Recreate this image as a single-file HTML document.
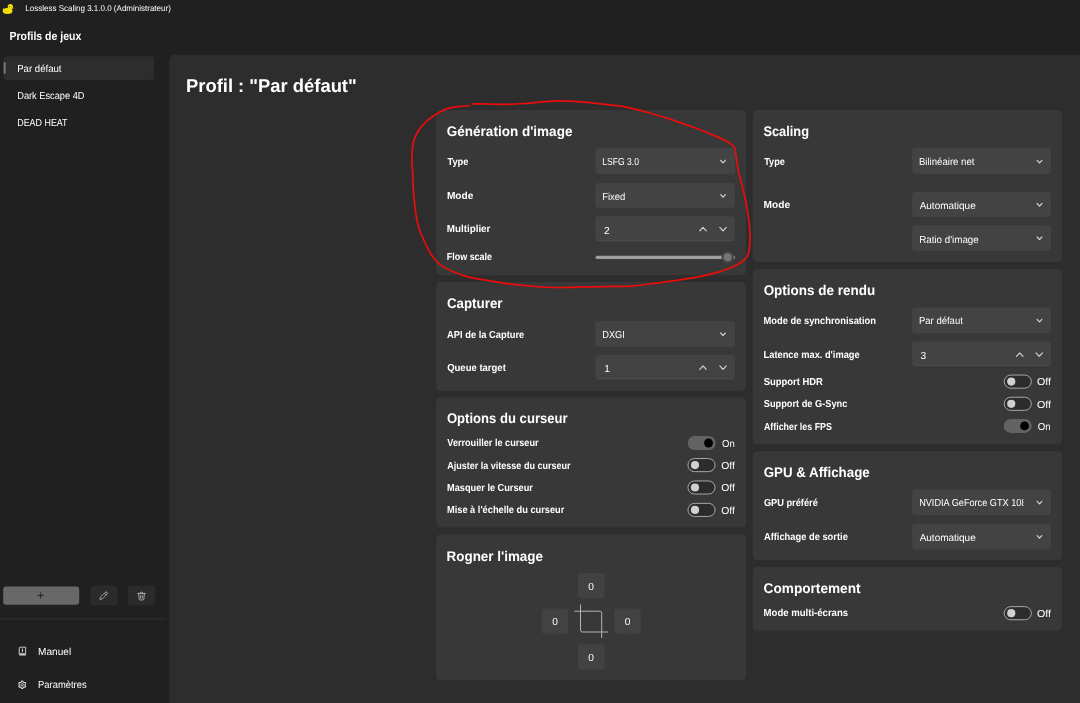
<!DOCTYPE html>
<html lang="fr"><head><meta charset="utf-8"><title>Lossless Scaling</title>
<style>
html,body{margin:0;padding:0;background:#202020;}
body{width:1080px;height:703px;overflow:hidden;position:relative;font-family:"Liberation Sans", Arial, sans-serif;}
#app{position:absolute;left:0;top:0;width:1080px;height:703px;overflow:hidden;background:#202020;}
.b{position:absolute;box-sizing:border-box;}
.tx{font-family:"Liberation Sans", Arial, sans-serif;fill:#fff;text-rendering:geometricPrecision;will-change:transform;}
.ov{position:absolute;left:0;top:0;pointer-events:none;}
</style></head>
<body><div id="app">
<svg class="ov" width="1080" height="703" viewBox="0 0 1080 703">
<rect x="169.3" y="54.8" width="930" height="670" rx="5.5" fill="#2d2d2d" />
<rect x="3.5" y="56.2" width="150.4" height="23.8" rx="3.2" fill="#2d2d2d" />
<rect x="3.6" y="62" width="2.1" height="12" rx="1" fill="#767676" />
<rect x="3.2" y="586.4" width="76" height="18.4" rx="3" fill="#686868" />
<rect x="90.9" y="586.2" width="26" height="18.8" rx="3" fill="#2b2b2b" stroke="#303030" stroke-width="0.6"/>
<rect x="128.1" y="586.2" width="26.6" height="18.8" rx="3" fill="#2b2b2b" stroke="#303030" stroke-width="0.6"/>
<rect x="0" y="618.4" width="166" height="0.9" rx="0" fill="#353535" />
<rect x="436.1" y="110" width="310" height="165.3" rx="4.5" fill="#383838" />
<rect x="436.1" y="281.9" width="310" height="108.85000000000002" rx="4.5" fill="#383838" />
<rect x="436.1" y="397.5" width="310" height="130.0" rx="4.5" fill="#383838" />
<rect x="436.1" y="534.5" width="310" height="145.5" rx="4.5" fill="#383838" />
<rect x="752.85" y="110" width="309.3" height="151.89999999999998" rx="4.5" fill="#383838" />
<rect x="752.85" y="268.9" width="309.3" height="175.10000000000002" rx="4.5" fill="#383838" />
<rect x="752.85" y="451.25" width="309.3" height="108.75" rx="4.5" fill="#383838" />
<rect x="752.85" y="567" width="309.3" height="63.5" rx="4.5" fill="#383838" />
<rect x="595.2" y="148.1" width="139.9" height="26.0" rx="3.5" fill="#434343" />
<rect x="595.2" y="183.1" width="139.9" height="24.700000000000017" rx="3.5" fill="#434343" />
<rect x="595.2" y="321.1" width="139.9" height="25.799999999999955" rx="3.5" fill="#434343" />
<rect x="595.2" y="216.25" width="139.9" height="25.0" rx="3.5" fill="#434343" />
<rect x="597.5" y="240.35" width="135.3" height="0.9" rx="0" fill="#4f4f4f" />
<rect x="595.2" y="355" width="139.9" height="24.25" rx="3.5" fill="#434343" />
<rect x="597.5" y="378.35" width="135.3" height="0.9" rx="0" fill="#4f4f4f" />
<rect x="912.1" y="148.1" width="139" height="26.0" rx="3.5" fill="#434343" />
<rect x="912.1" y="192" width="139" height="25" rx="3.5" fill="#434343" />
<rect x="912.1" y="225.2" width="139" height="25.700000000000017" rx="3.5" fill="#434343" />
<rect x="912.1" y="307.5" width="139" height="25.80000000000001" rx="3.5" fill="#434343" />
<rect x="912.1" y="489.5" width="139" height="25.700000000000045" rx="3.5" fill="#434343" />
<rect x="912.1" y="523.75" width="139" height="25.649999999999977" rx="3.5" fill="#434343" />
<rect x="912.1" y="341.6" width="139" height="24.3" rx="3.5" fill="#434343" />
<rect x="914.1" y="364.95" width="135" height="0.9" rx="0" fill="#4f4f4f" />
<rect x="763.5" y="182.6" width="287.6" height="1" rx="0" fill="#3e3e3e" />
<rect x="595.5" y="255.8" width="139.5" height="3.2" rx="1.6" fill="#9e9e9e" />
<circle cx="727.7" cy="257.3" r="6.2" fill="#454545"/><circle cx="727.7" cy="257.3" r="4" fill="#767676"/>
<rect x="578" y="573" width="26.5" height="25.6" rx="3" fill="#424242" />
<rect x="541.75" y="608.6" width="26.5" height="25.6" rx="3" fill="#424242" />
<rect x="614.25" y="608.6" width="26.5" height="25.6" rx="3" fill="#424242" />
<rect x="578" y="644.25" width="26.5" height="25.6" rx="3" fill="#424242" />
</svg>
<svg class="ov" width="1080" height="703" viewBox="0 0 1080 703">
<rect x="687.7" y="436" width="28" height="14" rx="7" fill="#636363"/>
<circle cx="708.5" cy="443" r="4.45" fill="#000"/>
<rect x="687.95" y="458.55" width="27.1" height="13.1" rx="6.55" fill="#2c2c2c" stroke="#b4b4b4" stroke-width="0.9"/>
<circle cx="695.0" cy="465.1" r="4.1" fill="#d0d0d0"/>
<rect x="687.95" y="480.95" width="27.1" height="13.1" rx="6.55" fill="#2c2c2c" stroke="#b4b4b4" stroke-width="0.9"/>
<circle cx="695.0" cy="487.5" r="4.1" fill="#d0d0d0"/>
<rect x="687.95" y="503.34999999999997" width="27.1" height="13.1" rx="6.55" fill="#2c2c2c" stroke="#b4b4b4" stroke-width="0.9"/>
<circle cx="695.0" cy="509.9" r="4.1" fill="#d0d0d0"/>
<rect x="1004.2" y="375.05" width="27.1" height="13.1" rx="6.55" fill="#2c2c2c" stroke="#b4b4b4" stroke-width="0.9"/>
<circle cx="1011.25" cy="381.6" r="4.1" fill="#d0d0d0"/>
<rect x="1004.2" y="397.25" width="27.1" height="13.1" rx="6.55" fill="#2c2c2c" stroke="#b4b4b4" stroke-width="0.9"/>
<circle cx="1011.25" cy="403.8" r="4.1" fill="#d0d0d0"/>
<rect x="1003.75" y="418.9" width="28" height="14" rx="7" fill="#636363"/>
<circle cx="1024.55" cy="425.9" r="4.45" fill="#000"/>
<rect x="1004.2" y="606.6500000000001" width="27.1" height="13.1" rx="6.55" fill="#2c2c2c" stroke="#b4b4b4" stroke-width="0.9"/>
<circle cx="1011.25" cy="613.2" r="4.1" fill="#d0d0d0"/>
</svg>
<svg class="ov tx" width="1080" height="703" viewBox="0 0 1080 703">
<text id="t0" x="25.34" y="11.20" font-size="8.3" textLength="145.48" lengthAdjust="spacingAndGlyphs">Lossless Scaling 3.1.0.0 (Administrateur)</text>
<text id="t1" x="9.54" y="39.50" font-size="11.8" font-weight="700" textLength="71.70" lengthAdjust="spacingAndGlyphs">Profils de jeux</text>
<text id="t2" x="17.18" y="72.00" font-size="10.2" textLength="44.33" lengthAdjust="spacingAndGlyphs">Par défaut</text>
<text id="t3" x="17.22" y="99.25" font-size="10.2" textLength="67.33" lengthAdjust="spacingAndGlyphs">Dark Escape 4D</text>
<text id="t4" x="17.28" y="126.00" font-size="10.2" textLength="50.26" lengthAdjust="spacingAndGlyphs">DEAD HEAT</text>
<text id="t5" x="38.12" y="654.80" font-size="10.2" textLength="33.01" lengthAdjust="spacingAndGlyphs">Manuel</text>
<text id="t6" x="38.12" y="688.30" font-size="10.2" textLength="48.54" lengthAdjust="spacingAndGlyphs">Paramètres</text>
<text id="t7" x="186.01" y="92.00" font-size="18.5" font-weight="700" textLength="170.72" lengthAdjust="spacingAndGlyphs">Profil : "Par défaut"</text>
<text id="t8" x="446.83" y="136.25" font-size="14" font-weight="700" textLength="125.58" lengthAdjust="spacingAndGlyphs">Génération d'image</text>
<text id="t9" x="446.88" y="308.25" font-size="14" font-weight="700" textLength="55.65" lengthAdjust="spacingAndGlyphs">Capturer</text>
<text id="t10" x="446.93" y="423.00" font-size="14" font-weight="700" textLength="120.69" lengthAdjust="spacingAndGlyphs">Options du curseur</text>
<text id="t11" x="446.54" y="560.50" font-size="14" font-weight="700" textLength="96.47" lengthAdjust="spacingAndGlyphs">Rogner l'image</text>
<text id="t12" x="763.41" y="136.00" font-size="14" font-weight="700" textLength="45.61" lengthAdjust="spacingAndGlyphs">Scaling</text>
<text id="t13" x="763.64" y="295.00" font-size="14" font-weight="700" textLength="111.55" lengthAdjust="spacingAndGlyphs">Options de rendu</text>
<text id="t14" x="763.67" y="476.75" font-size="14" font-weight="700" textLength="106.04" lengthAdjust="spacingAndGlyphs">GPU &amp; Affichage</text>
<text id="t15" x="763.62" y="592.50" font-size="14" font-weight="700" textLength="96.91" lengthAdjust="spacingAndGlyphs">Comportement</text>
<text id="t16" x="447.43" y="165.00" font-size="10.2" font-weight="700" textLength="20.87" lengthAdjust="spacingAndGlyphs">Type</text>
<text id="t17" x="446.88" y="198.75" font-size="10.2" font-weight="700" textLength="26.44" lengthAdjust="spacingAndGlyphs">Mode</text>
<text id="t18" x="446.75" y="232.00" font-size="10.2" font-weight="700" textLength="43.66" lengthAdjust="spacingAndGlyphs">Multiplier</text>
<text id="t19" x="446.87" y="259.50" font-size="10.2" font-weight="700" textLength="45.09" lengthAdjust="spacingAndGlyphs">Flow scale</text>
<text id="t20" x="447.10" y="337.50" font-size="10.2" font-weight="700" textLength="77.14" lengthAdjust="spacingAndGlyphs">API de la Capture</text>
<text id="t21" x="447.16" y="370.75" font-size="10.2" font-weight="700" textLength="58.67" lengthAdjust="spacingAndGlyphs">Queue target</text>
<text id="t22" x="447.30" y="446.25" font-size="10.2" font-weight="700" textLength="91.24" lengthAdjust="spacingAndGlyphs">Verrouiller le curseur</text>
<text id="t23" x="447.21" y="468.50" font-size="10.2" font-weight="700" textLength="123.29" lengthAdjust="spacingAndGlyphs">Ajuster la vitesse du curseur</text>
<text id="t24" x="447.00" y="490.75" font-size="10.2" font-weight="700" textLength="85.89" lengthAdjust="spacingAndGlyphs">Masquer le Curseur</text>
<text id="t25" x="446.97" y="513.00" font-size="10.2" font-weight="700" textLength="117.38" lengthAdjust="spacingAndGlyphs">Mise à l'échelle du curseur</text>
<text id="t26" x="764.16" y="165.00" font-size="10.2" font-weight="700" textLength="20.72" lengthAdjust="spacingAndGlyphs">Type</text>
<text id="t27" x="763.60" y="207.50" font-size="10.2" font-weight="700" textLength="26.51" lengthAdjust="spacingAndGlyphs">Mode</text>
<text id="t28" x="763.58" y="324.00" font-size="10.2" font-weight="700" textLength="112.34" lengthAdjust="spacingAndGlyphs">Mode de synchronisation</text>
<text id="t29" x="763.59" y="358.25" font-size="10.2" font-weight="700" textLength="96.08" lengthAdjust="spacingAndGlyphs">Latence max. d'image</text>
<text id="t30" x="763.69" y="385.00" font-size="10.2" font-weight="700" textLength="59.26" lengthAdjust="spacingAndGlyphs">Support HDR</text>
<text id="t31" x="763.74" y="407.25" font-size="10.2" font-weight="700" textLength="83.57" lengthAdjust="spacingAndGlyphs">Support de G-Sync</text>
<text id="t32" x="763.91" y="429.50" font-size="10.2" font-weight="700" textLength="67.99" lengthAdjust="spacingAndGlyphs">Afficher les FPS</text>
<text id="t33" x="763.88" y="506.25" font-size="10.2" font-weight="700" textLength="53.91" lengthAdjust="spacingAndGlyphs">GPU préféré</text>
<text id="t34" x="763.90" y="540.00" font-size="10.2" font-weight="700" textLength="83.95" lengthAdjust="spacingAndGlyphs">Affichage de sortie</text>
<text id="t35" x="763.61" y="616.30" font-size="10.2" font-weight="700" textLength="84.47" lengthAdjust="spacingAndGlyphs">Mode multi-écrans</text>
<text id="t36" x="602.36" y="165.00" font-size="10.2" textLength="36.65" lengthAdjust="spacingAndGlyphs">LSFG 3.0</text>
<text id="t37" x="602.18" y="200.00" font-size="10.2" textLength="23.22" lengthAdjust="spacingAndGlyphs">Fixed</text>
<text id="t38" x="604.04" y="234.00" font-size="10.2">2</text>
<text id="t39" x="602.25" y="338.00" font-size="10.2" textLength="22.63" lengthAdjust="spacingAndGlyphs">DXGI</text>
<text id="t40" x="604.37" y="372.00" font-size="10.2">1</text>
<text id="t41" x="918.95" y="165.00" font-size="10.2" textLength="55.55" lengthAdjust="spacingAndGlyphs">Bilinéaire net</text>
<text id="t42" x="919.65" y="209.00" font-size="10.2" textLength="56.07" lengthAdjust="spacingAndGlyphs">Automatique</text>
<text id="t43" x="919.13" y="243.00" font-size="10.2" textLength="59.65" lengthAdjust="spacingAndGlyphs">Ratio d'image</text>
<text id="t44" x="918.98" y="324.00" font-size="10.2" textLength="43.87" lengthAdjust="spacingAndGlyphs">Par défaut</text>
<text id="t45" x="920.39" y="359.00" font-size="10.2">3</text>
<text id="t46" x="919.65" y="541.00" font-size="10.2" textLength="56.07" lengthAdjust="spacingAndGlyphs">Automatique</text>
<text id="t47" x="722.05" y="446.60" font-size="10.2" textLength="12.67" lengthAdjust="spacingAndGlyphs">On</text>
<text id="t48" x="721.25" y="468.80" font-size="10.2" textLength="13.66" lengthAdjust="spacingAndGlyphs">Off</text>
<text id="t49" x="721.25" y="491.30" font-size="10.2" textLength="13.66" lengthAdjust="spacingAndGlyphs">Off</text>
<text id="t50" x="721.25" y="513.80" font-size="10.2" textLength="13.66" lengthAdjust="spacingAndGlyphs">Off</text>
<text id="t51" x="1036.91" y="385.25" font-size="10.2" textLength="14.10" lengthAdjust="spacingAndGlyphs">Off</text>
<text id="t52" x="1036.91" y="407.50" font-size="10.2" textLength="14.10" lengthAdjust="spacingAndGlyphs">Off</text>
<text id="t53" x="1037.86" y="429.75" font-size="10.2" textLength="12.87" lengthAdjust="spacingAndGlyphs">On</text>
<text id="t54" x="1036.91" y="616.50" font-size="10.2" textLength="14.10" lengthAdjust="spacingAndGlyphs">Off</text>
</svg>
<svg class="ov tx" width="1080" height="703" viewBox="0 0 1080 703">
<text x="591.2" y="589.6" font-size="10.2" text-anchor="middle">0</text>
<text x="555" y="625.1" font-size="10.2" text-anchor="middle">0</text>
<text x="627.5" y="625.1" font-size="10.2" text-anchor="middle">0</text>
<text x="591.2" y="660.8" font-size="10.2" text-anchor="middle">0</text>
<svg x="915" y="492" width="108.6" height="20" overflow="hidden"><text id="gpu" x="4.15" y="14.25" font-size="10.2" textLength="112.37" lengthAdjust="spacingAndGlyphs">NVIDIA GeForce GTX 1080</text></svg>
</svg>
<svg class="ov" width="1080" height="703" viewBox="0 0 1080 703">
<path d="M720.65 160.3 L723.0 162.90000000000003 L725.35 160.3" fill="none" stroke="#d6d6d6" stroke-width="1.15" stroke-linecap="round" stroke-linejoin="round"/>
<path d="M720.65 194.6 L723.0 197.20000000000002 L725.35 194.6" fill="none" stroke="#d6d6d6" stroke-width="1.15" stroke-linecap="round" stroke-linejoin="round"/>
<path d="M720.65 333.0 L723.0 335.6 L725.35 333.0" fill="none" stroke="#d6d6d6" stroke-width="1.15" stroke-linecap="round" stroke-linejoin="round"/>
<path d="M699.8 230.8 L703.0 227.40000000000003 L706.2 230.8" fill="none" stroke="#d6d6d6" stroke-width="1.15" stroke-linecap="round" stroke-linejoin="round"/>
<path d="M719.8 227.40000000000003 L723.0 230.8 L726.2 227.40000000000003" fill="none" stroke="#d6d6d6" stroke-width="1.15" stroke-linecap="round" stroke-linejoin="round"/>
<path d="M699.8 369.3 L703.0 365.90000000000003 L706.2 369.3" fill="none" stroke="#d6d6d6" stroke-width="1.15" stroke-linecap="round" stroke-linejoin="round"/>
<path d="M719.8 365.90000000000003 L723.0 369.3 L726.2 365.90000000000003" fill="none" stroke="#d6d6d6" stroke-width="1.15" stroke-linecap="round" stroke-linejoin="round"/>
<path d="M1037.15 160.3 L1039.5 162.90000000000003 L1041.85 160.3" fill="none" stroke="#d6d6d6" stroke-width="1.15" stroke-linecap="round" stroke-linejoin="round"/>
<path d="M1037.15 203.5 L1039.5 206.10000000000002 L1041.85 203.5" fill="none" stroke="#d6d6d6" stroke-width="1.15" stroke-linecap="round" stroke-linejoin="round"/>
<path d="M1037.15 237.0 L1039.5 239.60000000000002 L1041.85 237.0" fill="none" stroke="#d6d6d6" stroke-width="1.15" stroke-linecap="round" stroke-linejoin="round"/>
<path d="M1037.15 319.3 L1039.5 321.90000000000003 L1041.85 319.3" fill="none" stroke="#d6d6d6" stroke-width="1.15" stroke-linecap="round" stroke-linejoin="round"/>
<path d="M1037.15 501.3 L1039.5 503.90000000000003 L1041.85 501.3" fill="none" stroke="#d6d6d6" stroke-width="1.15" stroke-linecap="round" stroke-linejoin="round"/>
<path d="M1037.15 535.6 L1039.5 538.1999999999999 L1041.85 535.6" fill="none" stroke="#d6d6d6" stroke-width="1.15" stroke-linecap="round" stroke-linejoin="round"/>
<path d="M1016.55 356.3 L1019.75 352.90000000000003 L1022.95 356.3" fill="none" stroke="#d6d6d6" stroke-width="1.15" stroke-linecap="round" stroke-linejoin="round"/>
<path d="M1036.05 352.90000000000003 L1039.25 356.3 L1042.45 352.90000000000003" fill="none" stroke="#d6d6d6" stroke-width="1.15" stroke-linecap="round" stroke-linejoin="round"/>
<path d="M580.5 604.5 V630 Q580.5 632 582.5 632 H608 M574.3 611.2 H599.7 Q601.7 611.2 601.7 613.2 V638" fill="none" stroke="#b4b4b4" stroke-width="1"/>
<path d="M37.6 595.4 H43.8 M40.7 592.3 V598.5" stroke="#1c1c1c" stroke-width="0.9" fill="none"/>
<g transform="translate(103.6 595.8) scale(0.98)" fill="none" stroke="#c8c8c8" stroke-width="0.75" stroke-linejoin="round"><path d="M-3.8 3.8 L-3.1 1.2 L1.6 -3.5 A1.3 1.3 0 0 1 3.5 -1.6 L-1.2 3.1 Z M0.8 -2.7 L2.7 -0.8"/></g>
<g transform="translate(141.5 595.9) scale(1.04)" fill="none" stroke="#c8c8c8" stroke-width="0.75" stroke-linejoin="round" stroke-linecap="round"><path d="M-3.6 -2.4 H3.6 M-1.3 -2.4 A1.3 1.3 0 0 1 1.3 -2.4 M-2.8 -2.4 L-2.2 3.2 Q-2.1 3.9 -1.4 3.9 H1.4 Q2.1 3.9 2.2 3.2 L2.8 -2.4 M-0.8 -0.6 V2.2 M0.8 -0.6 V2.2"/></g>
<g transform="translate(22.45 651.3)" fill="none" stroke="#dcdcdc" stroke-width="0.9" stroke-linejoin="round"><path d="M-3.2 3.0 V-3.2 Q-3.2 -4.1 -2.3 -4.1 H3.2 V2.5 H-2.4"/><path d="M-3.2 2.9 H3.2 V4.0 H-2.3 Q-3.2 4.0 -3.2 3.4 Z" fill="#dcdcdc" stroke-width="0.4"/><path d="M0 -2.7 V1.0" stroke-width="0.95"/></g>
<g transform="translate(22.2 684.8)" fill="none" stroke="#dadada" stroke-width="1.1" stroke-linejoin="round"><path d="M3.46 1.44 L2.98 2.28 L1.73 2.26 L1.09 2.63 L0.49 3.72 L-0.49 3.72 L-1.09 2.63 L-1.73 2.26 L-2.98 2.28 L-3.46 1.44 L-2.83 0.37 L-2.83 -0.37 L-3.46 -1.44 L-2.98 -2.28 L-1.73 -2.26 L-1.09 -2.63 L-0.49 -3.72 L0.49 -3.72 L1.09 -2.63 L1.73 -2.26 L2.98 -2.28 L3.46 -1.44 L2.83 -0.37 L2.83 0.37 Z"/><circle r="1.2" stroke-width="0.9"/></g>
<g><ellipse cx="7.6" cy="11" rx="4.9" ry="2.9" fill="#f5e400"/><path d="M2.8 8 Q3 11 6 11 L6 8.8 Q4 9.4 2.8 8Z" fill="#f5e400"/><circle cx="10.3" cy="6.7" r="2.6" fill="#f5e400"/><path d="M11.6 6.2 L14 8.2 L11.4 8.8 Z" fill="#ff9a00"/><circle cx="9.4" cy="6.6" r="0.6" fill="#6b6b00"/><path d="M5 11 Q7 12.2 9 10.6" stroke="#ffb400" stroke-width="0.7" fill="none"/></g>
<path d="M472 103.8 C474.4 103.8 480.9 103.9 486.4 104 C491.9 104.1 498.9 104.5 505.2 104.4 C511.5 104.3 518.2 103.9 524 103.5 C529.8 103.1 534.4 102.6 540 102.2 C545.6 101.8 551.0 101.0 557.7 100.9 C564.5 100.8 572.9 101.3 580.5 101.8 C588.1 102.3 595.6 103.2 603.2 104.1 C610.8 105.0 618.4 105.7 626 107.1 C633.6 108.5 641.1 110.6 648.7 112.7 C656.3 114.8 663.9 117.1 671.5 119.6 C679.1 122.1 686.6 124.7 694.2 127.5 C701.8 130.3 711.3 134.1 717 136.6 C722.7 139.1 725.4 140.4 728.4 142.3 C731.4 144.2 733.4 145.3 734.7 148 C736.0 150.7 735.6 154.2 736.3 158.2 C736.9 162.2 737.6 167.3 738.6 171.9 C739.6 176.5 740.9 180.9 742 185.5 C743.1 190.1 744.4 194.6 745.4 199.2 C746.4 203.8 747.0 208.2 747.7 212.8 C748.4 217.4 749.1 222.0 749.5 226.5 C749.9 231.0 750.0 236.3 750 240 C750.0 243.7 749.8 245.9 749.4 248.5 C749.0 251.1 748.5 253.6 747.7 255.4 C746.9 257.2 746.5 258.1 744.7 259.6 C742.9 261.2 739.7 263.2 737 264.7 C734.3 266.2 731.3 267.5 728.5 268.6 C725.7 269.8 724.4 270.4 720 271.6 C715.6 272.9 708.0 274.9 702.1 276.1 C696.2 277.4 690.4 278.2 684.5 279.1 C678.6 280.0 672.9 280.9 667 281.7 C661.1 282.5 655.3 283.3 649.4 284 C643.5 284.7 639.1 285.7 631.8 286.1 C624.5 286.5 614.2 286.4 605.4 286.6 C596.6 286.8 587.8 287.0 579 287.1 C570.2 287.2 559.1 287.6 552.6 287.5 C546.1 287.4 544.1 287.1 540 286.8 C535.9 286.5 532.8 286.3 527.9 285.9 C523.0 285.5 517.1 285.0 510.8 284.2 C504.5 283.4 497.1 281.9 490.3 280.8 C483.5 279.7 476.1 279.0 469.9 277.4 C463.6 275.8 457.9 273.7 452.8 271.4 C447.7 269.1 442.8 266.8 439.1 263.8 C435.4 260.8 433.2 257.5 430.6 253.5 C428.1 249.5 425.9 244.5 423.8 239.9 C421.8 235.3 419.7 231.3 418.3 226.2 C416.9 221.1 416.0 214.8 415.2 209.1 C414.4 203.4 413.9 197.8 413.5 192.1 C413.1 186.4 413.0 180.8 412.7 175 C412.4 169.2 411.9 162.2 411.9 157.6 C411.9 153.0 412.1 150.7 412.5 147.6 C412.9 144.5 413.5 141.5 414.4 138.8 C415.3 136.1 416.5 133.8 418.1 131.3 C419.7 128.8 421.6 126.1 423.8 123.8 C426.0 121.5 428.6 119.5 431.3 117.5 C434.0 115.5 437.2 113.5 440.1 111.9 C443.0 110.3 445.7 109.0 448.8 108.1 C451.9 107.2 455.5 106.9 458.9 106.5 C462.2 106.1 467.2 106.0 468.9 105.9" fill="none" stroke="#ec0c0c" stroke-width="1.7" stroke-linecap="round" stroke-linejoin="round"/>
</svg>
</div></body></html>
